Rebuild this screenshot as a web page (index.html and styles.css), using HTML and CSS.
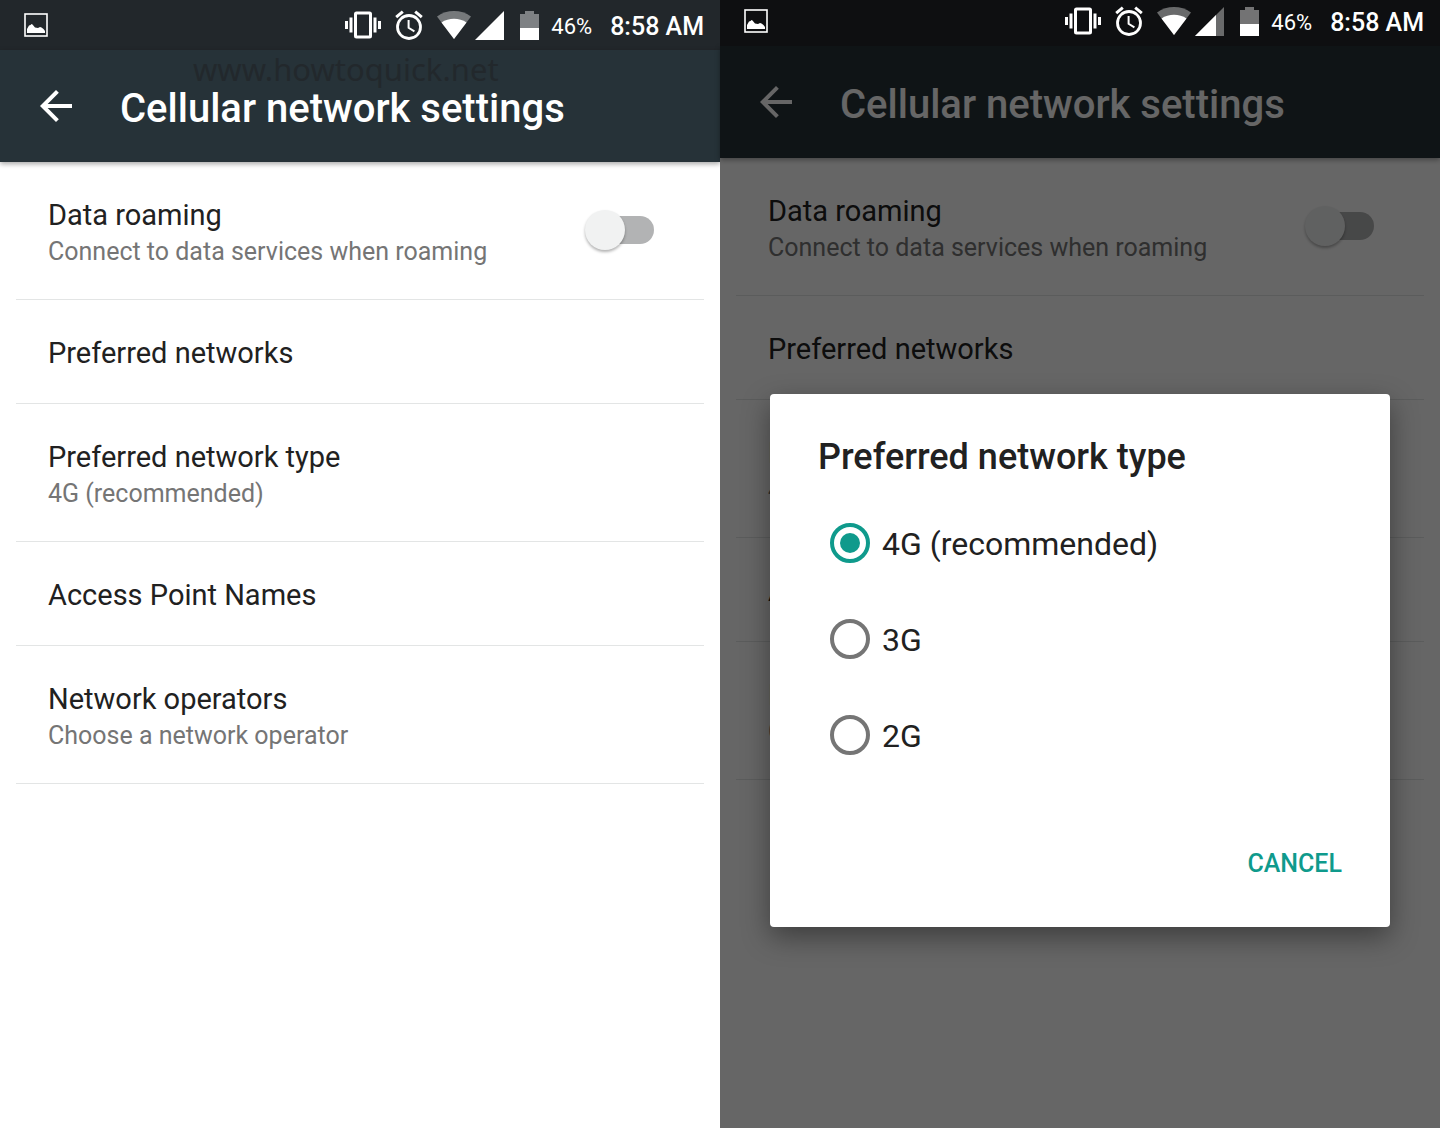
FILE: index.html
```html
<!DOCTYPE html>
<html lang="en">
<head>
  <meta charset="utf-8">
  <meta name="viewport" content="width=device-width, initial-scale=1">
  <title>Cellular network settings</title>
  <link rel="stylesheet" href="styles.css">
</head>
<body>
  <svg class="sprite" aria-hidden="true">
    <symbol id="i-picture" viewBox="0 0 24 24">
      <rect x="1" y="1" width="22" height="22" fill="none" stroke="currentColor" stroke-width="1.6"/>
      <path fill="currentColor" d="M3 20v-4l2-3.500 1.500-.5 1-1 1 .5L11 14.500l3 .5 2-1 1.500.5 2 1.500 1.500 2v2z"/>
    </symbol>
    <symbol id="i-vibrate" viewBox="0 0 36 28">
      <rect x="10.500" y="2" width="15" height="24" rx="1" fill="none" stroke="currentColor" stroke-width="3"/>
      <path fill="currentColor" d="M0 10h3v8H0zM4.500 6.500h3v15h-3zM28.500 6.500h3v15h-3zM33 10h3v8h-3z"/>
    </symbol>
    <symbol id="i-alarm" viewBox="0 0 28 30">
      <g fill="none" stroke="currentColor">
        <circle cx="14" cy="17" r="11.500" stroke-width="2.800"/>
        <path stroke-width="3" d="M1.200 7.200 7.800 1.600M26.800 7.200 20.200 1.600"/>
        <path stroke-width="2" d="M13.600 10v7.800l5.800 3.500"/>
      </g>
    </symbol>
    <symbol id="i-wifi" viewBox="0 0 34 28">
      <path fill="currentColor" opacity=".38" d="M0 5.500C10-1.800 24-1.800 34 5.500L17 28z"/>
      <path fill="currentColor" d="M4.500 11.500c7-5 18-5 25 0L17 28z"/>
    </symbol>
    <symbol id="i-signal" viewBox="0 0 29 29">
      <path fill="currentColor" d="M0 29 29 0v29z"/>
    </symbol>
    <symbol id="i-signal-weak" viewBox="0 0 29 29">
      <path fill="currentColor" opacity=".38" d="M0 29 29 0v29z"/>
      <path fill="currentColor" d="M0 29 21 8v21z"/>
    </symbol>
    <symbol id="i-battery" viewBox="0 0 19 29">
      <path fill="currentColor" opacity=".42" d="M5 0h9v3h5v14H0V3h5z"/>
      <path fill="currentColor" d="M0 17h19v12H0z"/>
    </symbol>
    <symbol id="i-back" viewBox="0 0 24 24">
      <path fill="currentColor" d="M20 11H7.830l5.590-5.590L12 4l-8 8 8 8 1.410-1.410L7.830 13H20z"/>
    </symbol>
  </svg>

  <main class="screens">
    <section class="screen">
      <div class="status status--tall">
        <svg class="icon-picture"><use href="#i-picture"/></svg>
        <div class="tray">
          <svg class="icon-vibrate"><use href="#i-vibrate"/></svg>
          <svg class="icon-alarm"><use href="#i-alarm"/></svg>
          <div class="radios">
            <svg class="icon-wifi"><use href="#i-wifi"/></svg>
            <svg class="icon-signal"><use href="#i-signal"/></svg>
          </div>
          <div class="power">
            <svg class="icon-battery"><use href="#i-battery"/></svg>
            <span class="percent">46%</span>
          </div>
          <time class="clock">8:58 AM</time>
        </div>
      </div>
      <header class="toolbar">
        <button class="back" type="button" aria-label="Back"><svg class="icon-back"><use href="#i-back"/></svg></button>
        <h1 class="toolbar-title">Cellular network settings</h1>
        <span class="watermark">www.howtoquick.net</span>
      </header>
      <ul class="settings">
        <li class="row row--two">
          <label class="row-text" for="roaming-a"><span class="row-title">Data roaming</span><span class="row-note">Connect to data services when roaming</span></label>
          <input class="switch" type="checkbox" role="switch" id="roaming-a">
        </li>
        <li class="row"><div class="row-text"><span class="row-title">Preferred networks</span></div></li>
        <li class="row row--two"><div class="row-text"><span class="row-title">Preferred network type</span><span class="row-note">4G (recommended)</span></div></li>
        <li class="row"><div class="row-text"><span class="row-title">Access Point Names</span></div></li>
        <li class="row row--two"><div class="row-text"><span class="row-title">Network operators</span><span class="row-note">Choose a network operator</span></div></li>
      </ul>
    </section>

    <section class="screen">
      <div class="status status--dim">
        <svg class="icon-picture"><use href="#i-picture"/></svg>
        <div class="tray">
          <svg class="icon-vibrate"><use href="#i-vibrate"/></svg>
          <svg class="icon-alarm"><use href="#i-alarm"/></svg>
          <div class="radios">
            <svg class="icon-wifi"><use href="#i-wifi"/></svg>
            <svg class="icon-signal"><use href="#i-signal-weak"/></svg>
          </div>
          <div class="power">
            <svg class="icon-battery"><use href="#i-battery"/></svg>
            <span class="percent">46%</span>
          </div>
          <time class="clock">8:58 AM</time>
        </div>
      </div>
      <header class="toolbar">
        <button class="back" type="button" aria-label="Back"><svg class="icon-back"><use href="#i-back"/></svg></button>
        <h1 class="toolbar-title">Cellular network settings</h1>
      </header>
      <ul class="settings">
        <li class="row row--two">
          <label class="row-text" for="roaming-b"><span class="row-title">Data roaming</span><span class="row-note">Connect to data services when roaming</span></label>
          <input class="switch" type="checkbox" role="switch" id="roaming-b">
        </li>
        <li class="row"><div class="row-text"><span class="row-title">Preferred networks</span></div></li>
        <li class="row row--two"><div class="row-text"><span class="row-title">Preferred network type</span><span class="row-note">4G (recommended)</span></div></li>
        <li class="row"><div class="row-text"><span class="row-title">Access Point Names</span></div></li>
        <li class="row row--two"><div class="row-text"><span class="row-title">Network operators</span><span class="row-note">Choose a network operator</span></div></li>
      </ul>
      <div class="scrim">
        <form class="dialog" role="dialog" aria-labelledby="dialog-title">
          <h2 class="dialog-title" id="dialog-title">Preferred network type</h2>
          <div class="options">
            <label class="option"><input class="radio" type="radio" name="network" checked><span class="option-name">4G (recommended)</span></label>
            <label class="option"><input class="radio" type="radio" name="network"><span class="option-name">3G</span></label>
            <label class="option"><input class="radio" type="radio" name="network"><span class="option-name">2G</span></label>
          </div>
          <div class="actions"><button class="cancel" type="button">CANCEL</button></div>
        </form>
      </div>
    </section>
  </main>
</body>
</html>
```
FILE: styles.css
```css
* { box-sizing: border-box; }

body {
  margin: 0;
  font-family: Roboto, "Liberation Sans", sans-serif;
  color: #212121;
  background: #fff;
}

svg { display: block; flex: none; }
.sprite { position: absolute; width: 0; height: 0; }

.screens {
  display: grid;
  grid-template-columns: 1fr 1fr;
  min-height: 100vh;
}
.screen { position: relative; background: #fff; }

/* Status bar */
.status {
  position: relative;
  display: flex;
  align-items: center;
  justify-content: space-between;
  height: 46px;
  padding: 0 16px 4px 24px;
  color: #fff;
  background: #22272b;
}
.status--tall { height: 50px; padding-top: 4px; }
.status--dim { z-index: 2; background: #0e0f11; }
.tray { display: flex; align-items: center; gap: 14px; }
.radios { display: flex; align-items: center; gap: 4px; margin-right: 2px; }
.power { display: flex; align-items: center; gap: 12px; margin-right: 4px; }
.icon-picture { width: 24px; height: 24px; }
.icon-vibrate { width: 36px; height: 28px; }
.icon-alarm { width: 28px; height: 30px; }
.icon-wifi { width: 34px; height: 28px; }
.icon-signal { width: 29px; height: 29px; }
.icon-battery { width: 19px; height: 29px; }
.percent { font-size: 22px; line-height: 28px; padding-top: 4px; }
.clock { font-size: 25px; line-height: 28px; font-weight: 500; padding-top: 4px; }

/* Toolbar */
.toolbar {
  position: relative;
  display: flex;
  align-items: center;
  gap: 40px;
  height: 112px;
  padding: 0 32px;
  color: #fff;
  background: #263238;
  box-shadow: 0 2px 5px rgba(0, 0, 0, .35);
}
.back { padding: 0; border: 0; color: inherit; background: none; }
.icon-back { width: 48px; height: 48px; }
.toolbar-title { margin: 0; padding-top: 6px; font-size: 40px; line-height: 48px; font-weight: 500; }
.watermark {
  position: absolute;
  top: 0;
  left: 193px;
  font-family: "Noto Sans", "Open Sans", sans-serif;
  font-size: 31px;
  line-height: 38px;
  color: #22282c;
}

/* Settings list */
.settings { margin: 0; padding: 0 16px; list-style: none; }
.row {
  display: flex;
  align-items: center;
  justify-content: space-between;
  height: 104px;
  padding: 0 50px 0 32px;
  border-bottom: 1px solid #e3e5e5;
}
.row--two { height: 138px; }
.row-text { display: flex; flex-direction: column; padding-top: 2px; }
.row--two .row-text { padding-top: 4px; }
.row-title { font-size: 29px; line-height: 38px; }
.row-note { font-size: 25px; line-height: 36px; color: #757575; }

.switch {
  appearance: none;
  width: 64px;
  height: 28px;
  margin: 0 0 2px;
  border-radius: 14px;
  background: #b2b3b4;
}
.switch::before {
  content: "";
  display: block;
  width: 40px;
  height: 40px;
  margin: -6px 0 0 -5px;
  border-radius: 50%;
  background: #f1f2f2;
  box-shadow: 0 2px 3px rgba(0, 0, 0, .3);
}

/* Dialog */
.scrim {
  position: absolute;
  inset: 0;
  display: flex;
  align-items: center;
  padding: 192px 50px 0;
  background: rgba(0, 0, 0, .6);
}
.dialog {
  flex: 1;
  padding: 37px 48px 27px;
  border-radius: 4px;
  background: #fff;
  box-shadow: 0 10px 28px rgba(0, 0, 0, .4);
}
.dialog-title { margin: 0 0 12px; font-size: 36px; line-height: 52px; font-weight: 500; }
.options { padding-left: 12px; }
.option { display: flex; align-items: center; gap: 12px; height: 96px; font-size: 32px; }
.option-name { padding-top: 2px; }
.radio {
  appearance: none;
  display: grid;
  place-items: center;
  width: 40px;
  height: 40px;
  margin: 0;
  border: 4px solid #757575;
  border-radius: 50%;
}
.radio:checked { border-color: #0f9a8c; }
.radio:checked::before {
  content: "";
  width: 20px;
  height: 20px;
  border-radius: 50%;
  background: #0f9a8c;
}
.actions { display: flex; justify-content: flex-end; margin-top: 45px; }
.cancel {
  height: 72px;
  padding: 0;
  border: 0;
  font: 500 25px/32px Roboto, "Liberation Sans", sans-serif;
  color: #0f9a8c;
  background: none;
}
```
